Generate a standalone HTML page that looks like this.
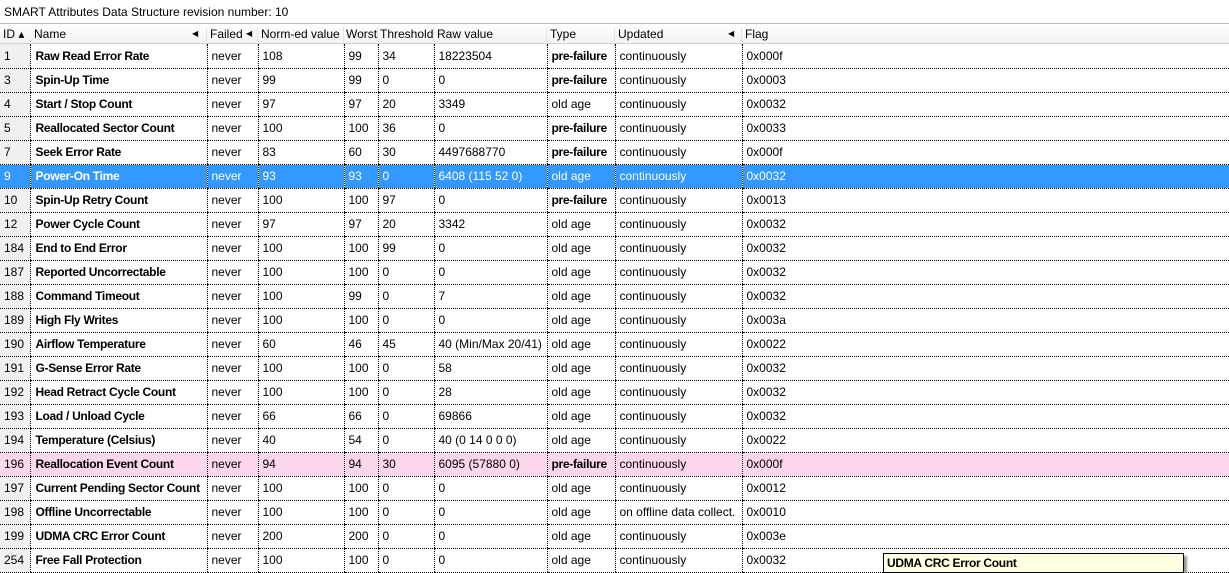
<!DOCTYPE html>
<html><head><meta charset="utf-8"><style>
*{margin:0;padding:0;box-sizing:border-box}
body{width:1229px;height:568px;overflow:hidden;background:#fff;font-family:"Liberation Sans",sans-serif;font-size:12px;color:#000;position:relative}
.title{position:absolute;left:4px;top:5px;font-size:12px}
.hdr{position:absolute;left:0;top:23px;width:1229px;height:21px;background:linear-gradient(#fff,#f2f2f2);border-top:1px solid #bdbdbd;border-bottom:1px solid #d5d5d5}
.hdr div{position:absolute;top:3px;white-space:nowrap}
.hs{position:absolute;top:0;height:20px;border-left:1px solid #e3e3e3}
table{position:absolute;left:0;top:44px;width:1229px;border-collapse:collapse;table-layout:fixed}
td{height:24px;padding:0 0 0 4px;white-space:nowrap;overflow:hidden;border-bottom:1px dotted #000;border-left:1px dotted #000;font-size:12px}
td:first-child{border-left:none;background:#f0f0f0}
td.b{font-weight:bold;padding-left:5px;letter-spacing:-0.3px}
tr.sel td{background:#3399ff;color:#fff}
tr.pk td{background:#fcd6ea}
.tip{position:absolute;left:883px;top:553px;width:301px;height:20px;background:#ffffe1;border:1px solid #000;font-weight:bold;font-size:12px;padding:2px 0 0 3px;box-shadow:3px 3px 2px #999;letter-spacing:-0.3px}
</style></head><body>
<div class="title">SMART Attributes Data Structure revision number: 10</div>
<div class="hdr">
<div style="left:3px">ID ▴</div>
<div style="left:34px">Name</div><div style="left:192px;font-size:8px;top:5px">◀</div>
<div class="hs" style="left:206px"></div>
<div style="left:210px">Failed</div><div style="left:246px;font-size:8px;top:5px">◀</div>
<div class="hs" style="left:257px"></div>
<div style="left:261px">Norm-ed value</div>
<div class="hs" style="left:343px"></div>
<div style="left:346px">Worst</div>
<div class="hs" style="left:377px"></div>
<div style="left:380px">Threshold</div>
<div class="hs" style="left:433px"></div>
<div style="left:437px">Raw value</div>
<div class="hs" style="left:546px"></div>
<div style="left:550px">Type</div>
<div class="hs" style="left:614px"></div>
<div style="left:618px">Updated</div><div style="left:728px;font-size:8px;top:5px">◀</div>
<div class="hs" style="left:741px"></div>
<div style="left:745px">Flag</div>
</div>
<table>
<colgroup><col style="width:30px"><col style="width:177px"><col style="width:51px"><col style="width:86px"><col style="width:34px"><col style="width:56px"><col style="width:113px"><col style="width:68px"><col style="width:127px"><col style="width:487px"></colgroup>
<tr><td>1</td><td class="b">Raw Read Error Rate</td><td>never</td><td>108</td><td>99</td><td>34</td><td>18223504</td><td class="b" style="padding-left:4px">pre-failure</td><td>continuously</td><td>0x000f</td></tr>
<tr><td>3</td><td class="b">Spin-Up Time</td><td>never</td><td>99</td><td>99</td><td>0</td><td>0</td><td class="b" style="padding-left:4px">pre-failure</td><td>continuously</td><td>0x0003</td></tr>
<tr><td>4</td><td class="b">Start / Stop Count</td><td>never</td><td>97</td><td>97</td><td>20</td><td>3349</td><td>old age</td><td>continuously</td><td>0x0032</td></tr>
<tr><td>5</td><td class="b">Reallocated Sector Count</td><td>never</td><td>100</td><td>100</td><td>36</td><td>0</td><td class="b" style="padding-left:4px">pre-failure</td><td>continuously</td><td>0x0033</td></tr>
<tr><td>7</td><td class="b">Seek Error Rate</td><td>never</td><td>83</td><td>60</td><td>30</td><td>4497688770</td><td class="b" style="padding-left:4px">pre-failure</td><td>continuously</td><td>0x000f</td></tr>
<tr class="sel"><td>9</td><td class="b">Power-On Time</td><td>never</td><td>93</td><td>93</td><td>0</td><td>6408 (115 52 0)</td><td>old age</td><td>continuously</td><td>0x0032</td></tr>
<tr><td>10</td><td class="b">Spin-Up Retry Count</td><td>never</td><td>100</td><td>100</td><td>97</td><td>0</td><td class="b" style="padding-left:4px">pre-failure</td><td>continuously</td><td>0x0013</td></tr>
<tr><td>12</td><td class="b">Power Cycle Count</td><td>never</td><td>97</td><td>97</td><td>20</td><td>3342</td><td>old age</td><td>continuously</td><td>0x0032</td></tr>
<tr><td>184</td><td class="b">End to End Error</td><td>never</td><td>100</td><td>100</td><td>99</td><td>0</td><td>old age</td><td>continuously</td><td>0x0032</td></tr>
<tr><td>187</td><td class="b">Reported Uncorrectable</td><td>never</td><td>100</td><td>100</td><td>0</td><td>0</td><td>old age</td><td>continuously</td><td>0x0032</td></tr>
<tr><td>188</td><td class="b">Command Timeout</td><td>never</td><td>100</td><td>99</td><td>0</td><td>7</td><td>old age</td><td>continuously</td><td>0x0032</td></tr>
<tr><td>189</td><td class="b">High Fly Writes</td><td>never</td><td>100</td><td>100</td><td>0</td><td>0</td><td>old age</td><td>continuously</td><td>0x003a</td></tr>
<tr><td>190</td><td class="b">Airflow Temperature</td><td>never</td><td>60</td><td>46</td><td>45</td><td>40 (Min/Max 20/41)</td><td>old age</td><td>continuously</td><td>0x0022</td></tr>
<tr><td>191</td><td class="b">G-Sense Error Rate</td><td>never</td><td>100</td><td>100</td><td>0</td><td>58</td><td>old age</td><td>continuously</td><td>0x0032</td></tr>
<tr><td>192</td><td class="b">Head Retract Cycle Count</td><td>never</td><td>100</td><td>100</td><td>0</td><td>28</td><td>old age</td><td>continuously</td><td>0x0032</td></tr>
<tr><td>193</td><td class="b">Load / Unload Cycle</td><td>never</td><td>66</td><td>66</td><td>0</td><td>69866</td><td>old age</td><td>continuously</td><td>0x0032</td></tr>
<tr><td>194</td><td class="b">Temperature (Celsius)</td><td>never</td><td>40</td><td>54</td><td>0</td><td>40 (0 14 0 0 0)</td><td>old age</td><td>continuously</td><td>0x0022</td></tr>
<tr class="pk"><td>196</td><td class="b">Reallocation Event Count</td><td>never</td><td>94</td><td>94</td><td>30</td><td>6095 (57880 0)</td><td class="b" style="padding-left:4px">pre-failure</td><td>continuously</td><td>0x000f</td></tr>
<tr><td>197</td><td class="b">Current Pending Sector Count</td><td>never</td><td>100</td><td>100</td><td>0</td><td>0</td><td>old age</td><td>continuously</td><td>0x0012</td></tr>
<tr><td>198</td><td class="b">Offline Uncorrectable</td><td>never</td><td>100</td><td>100</td><td>0</td><td>0</td><td>old age</td><td>on offline data collect.</td><td>0x0010</td></tr>
<tr><td>199</td><td class="b">UDMA CRC Error Count</td><td>never</td><td>200</td><td>200</td><td>0</td><td>0</td><td>old age</td><td>continuously</td><td>0x003e</td></tr>
<tr><td>254</td><td class="b">Free Fall Protection</td><td>never</td><td>100</td><td>100</td><td>0</td><td>0</td><td>old age</td><td>continuously</td><td>0x0032</td></tr>
</table>
<div class="tip">UDMA CRC Error Count</div>
</body></html>
